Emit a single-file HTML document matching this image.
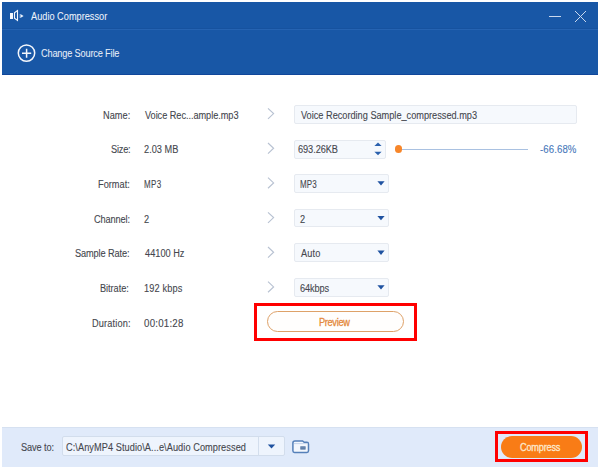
<!DOCTYPE html>
<html><head><meta charset="utf-8">
<style>
html,body{margin:0;padding:0;}
body{width:600px;height:470px;overflow:hidden;background:#ffffff;position:relative;font-family:"Liberation Sans", sans-serif;}
.a{position:absolute;box-sizing:border-box;}
.t{position:absolute;white-space:nowrap;font-family:"Liberation Sans", sans-serif;-webkit-text-stroke:0.1px currentColor;transform:scaleX(0.92);transform-origin:0 0;}
</style></head><body>
<!-- window frame -->
<div class="a" style="left:2px;top:2px;width:596px;height:27px;background:#1857a6;"></div>
<div class="a" style="left:2px;top:28px;width:596px;height:1px;background:#16529f;"></div>
<div class="a" style="left:2px;top:29px;width:596px;height:1px;background:#2563b2;"></div>
<div class="a" style="left:2px;top:30px;width:596px;height:45px;background:#1857a6;"></div>
<div class="a" style="left:2px;top:74px;width:596px;height:1px;background:#10469a;"></div>
<!-- speaker icon -->
<svg class="a" style="left:0;top:0" width="30" height="30" viewBox="0 0 30 30">
  <rect x="10" y="13" width="3" height="6" fill="#f4f7fc"/>
  <path d="M14.5 12.8 L17.5 10.6 L17.5 20.4 L14.5 18.2 Z" fill="none" stroke="#f4f7fc" stroke-width="1.1"/>
  <rect x="19.7" y="14" width="1.1" height="4" fill="#9fbde6"/>
  <path d="M20.8 14.3 L23.6 16 L20.8 17.7 Z" fill="#eef3fb"/>
</svg>
<!-- min / close -->
<svg class="a" style="left:540px;top:0" width="60" height="30" viewBox="540 0 60 30">
  <path d="M549 16.5 H561" stroke="#c9d8ee" stroke-width="1"/>
  <path d="M575 11 L586 22 M586 11 L575 22" stroke="#c9d8ee" stroke-width="1"/>
</svg>
<!-- plus circle -->
<svg class="a" style="left:0;top:30px" width="40" height="45" viewBox="0 30 40 45">
  <circle cx="26.5" cy="53.1" r="8.2" fill="none" stroke="#f4f7fc" stroke-width="1.5"/>
  <path d="M22 53.2 H31.2 M26.6 48.8 V57.8" stroke="#f4f7fc" stroke-width="1.5"/>
</svg>

<!-- chevrons -->
<svg class="a" style="left:260px;top:100px" width="24" height="240" viewBox="260 100 24 240">
  <g fill="none" stroke="#b8c2d2" stroke-width="1.15">
    <path d="M268 108.30 L273.6 113.60 L268 118.90"/>
    <path d="M268 142.97 L273.6 148.27 L268 153.57"/>
    <path d="M268 177.64 L273.6 182.94 L268 188.24"/>
    <path d="M268 212.31 L273.6 217.61 L268 222.91"/>
    <path d="M268 246.98 L273.6 252.28 L268 257.58"/>
    <path d="M268 281.65 L273.6 286.95 L268 292.25"/>
  </g>
</svg>

<!-- fields -->
<div class="a" style="left:294px;top:105px;width:283px;height:18.5px;background:#f6f9fd;border:1px solid #e6eaf0;border-radius:2px;"></div>
<div class="a" style="left:294px;top:140px;width:91.5px;height:18.5px;background:#f6f9fd;border:1px solid #e6eaf0;border-radius:2px;"></div>
<svg class="a" style="left:370px;top:140px" width="16" height="19" viewBox="370 140 16 19">
  <path d="M374.4 146.1 L378 142.5 L381.6 146.1 Z" fill="#2a60ad"/>
  <path d="M374.4 151.7 L378 155.3 L381.6 151.7 Z" fill="#2a60ad"/>
</svg>
<!-- slider -->
<div class="a" style="left:400px;top:148.6px;width:128px;height:1.6px;background:#a9c1e1;"></div>
<div class="a" style="left:394.5px;top:145.4px;width:7.6px;height:7.6px;border-radius:50%;background:#f7862a;"></div>

<div class="a" style="left:294px;top:174px;width:95px;height:18.5px;background:#f6f9fd;border:1px solid #e6eaf0;border-radius:2px;"></div>
<div class="a" style="left:294px;top:208.7px;width:95px;height:18.5px;background:#f6f9fd;border:1px solid #e6eaf0;border-radius:2px;"></div>
<div class="a" style="left:294px;top:243.4px;width:95px;height:18.5px;background:#f6f9fd;border:1px solid #e6eaf0;border-radius:2px;"></div>
<div class="a" style="left:294px;top:278px;width:95px;height:18.5px;background:#f6f9fd;border:1px solid #e6eaf0;border-radius:2px;"></div>
<svg class="a" style="left:370px;top:170px" width="20" height="130" viewBox="370 170 20 130">
  <g fill="#1f52a0">
    <path d="M377.4 181.3 H384.6 L381 185.6 Z"/>
    <path d="M377.4 216 H384.6 L381 220.3 Z"/>
    <path d="M377.4 250.6 H384.6 L381 254.9 Z"/>
    <path d="M377.4 285.3 H384.6 L381 289.6 Z"/>
  </g>
</svg>

<!-- preview -->
<div class="a" style="left:266.5px;top:311px;width:137px;height:21px;border:1px solid #dea168;border-radius:11px;background:#fffefd;"></div>
<div class="a" style="left:254px;top:303px;width:163px;height:38px;border:3px solid #ff0000;"></div>

<!-- footer -->
<div class="a" style="left:2px;top:427px;width:596px;height:40px;background:#e0eafa;border-top:1px solid #d6e1f1;"></div>
<div class="a" style="left:61.5px;top:436.2px;width:223px;height:20.2px;background:#eef4fd;border:1px solid #d2ddec;border-radius:2px;"></div>
<div class="a" style="left:258px;top:437px;width:1px;height:18.5px;background:#d3deed;"></div>
<svg class="a" style="left:260px;top:437px" width="24" height="20" viewBox="260 437 24 20">
  <path d="M267.8 444.5 H275.2 L271.5 448.6 Z" fill="#1f52a0"/>
</svg>
<svg class="a" style="left:288px;top:436px" width="26" height="22" viewBox="288 436 26 22">
  <path d="M292.9 443 Q292.9 440.9 295 440.9 H302.6 L304.2 442.3 H306.9 Q308.5 442.3 308.5 443.9 V450.8 Q308.5 452.4 306.9 452.4 H294.5 Q292.9 452.4 292.9 450.8 Z" fill="#f3f7fd" stroke="#5580b9" stroke-width="1.5"/>
  <path d="M294 443.6 H307.6" stroke="#b9cce6" stroke-width="0.8"/>
  <rect x="300.3" y="446.3" width="5.3" height="3.3" fill="#5474a0"/>
  <path d="M300.3 447.9 H305.6" stroke="#8aa3c4" stroke-width="0.6"/>
</svg>
<div class="a" style="left:501px;top:436px;width:81px;height:21.5px;border-radius:11px;background:#f97c16;"></div>
<div class="a" style="left:495px;top:431px;width:92.5px;height:31px;border:3px solid #ff0000;"></div>

<span id="title" class="t" style="left:30.97px;top:11.83px;font-size:10.00px;line-height:10.00px;letter-spacing:0.004px;color:#eef3fb;transform:scaleX(0.920);-webkit-text-stroke:0.05px currentColor">Audio Compressor</span>
<span id="change" class="t" style="left:40.89px;top:49.43px;font-size:10.00px;line-height:10.00px;letter-spacing:-0.185px;color:#e6edf8;transform:scaleX(0.920);-webkit-text-stroke:0.05px currentColor">Change Source File</span>
<span id="lab0" class="t" style="left:103.30px;top:110.73px;font-size:10.00px;line-height:10.00px;letter-spacing:0.023px;color:#45474e;transform:scaleX(0.920);">Name:</span>
<span id="lab1" class="t" style="left:110.90px;top:145.40px;font-size:10.00px;line-height:10.00px;letter-spacing:-0.227px;color:#45474e;transform:scaleX(0.920);">Size:</span>
<span id="lab2" class="t" style="left:98.30px;top:180.07px;font-size:10.00px;line-height:10.00px;letter-spacing:0.015px;color:#45474e;transform:scaleX(0.920);">Format:</span>
<span id="lab3" class="t" style="left:94.40px;top:214.75px;font-size:10.00px;line-height:10.00px;letter-spacing:-0.121px;color:#45474e;transform:scaleX(0.920);">Channel:</span>
<span id="lab4" class="t" style="left:74.90px;top:249.41px;font-size:10.00px;line-height:10.00px;letter-spacing:-0.111px;color:#45474e;transform:scaleX(0.920);">Sample Rate:</span>
<span id="lab5" class="t" style="left:100.30px;top:284.09px;font-size:10.00px;line-height:10.00px;letter-spacing:-0.061px;color:#45474e;transform:scaleX(0.920);">Bitrate:</span>
<span id="lab6" class="t" style="left:91.80px;top:318.76px;font-size:10.00px;line-height:10.00px;letter-spacing:0.183px;color:#45474e;transform:scaleX(0.920);">Duration:</span>
<span id="val0" class="t" style="left:145.19px;top:110.73px;font-size:10.00px;line-height:10.00px;letter-spacing:-0.060px;color:#45474e;transform:scaleX(0.920);">Voice Rec...ample.mp3</span>
<span id="val1" class="t" style="left:144.46px;top:145.40px;font-size:10.00px;line-height:10.00px;letter-spacing:0.018px;color:#45474e;transform:scaleX(0.920);">2.03 MB</span>
<span id="val2" class="t" style="left:144.30px;top:180.07px;font-size:10.00px;line-height:10.00px;letter-spacing:0.510px;color:#45474e;transform:scaleX(0.800);">MP3</span>
<span id="val3" class="t" style="left:144.46px;top:214.75px;font-size:10.00px;line-height:10.00px;letter-spacing:0.000px;color:#45474e;transform:scaleX(0.920);">2</span>
<span id="val4" class="t" style="left:145.23px;top:249.41px;font-size:10.00px;line-height:10.00px;letter-spacing:0.013px;color:#45474e;transform:scaleX(0.920);">44100 Hz</span>
<span id="val5" class="t" style="left:144.30px;top:284.09px;font-size:10.00px;line-height:10.00px;letter-spacing:0.156px;color:#45474e;transform:scaleX(0.920);">192 kbps</span>
<span id="val6" class="t" style="left:144.49px;top:318.76px;font-size:10.00px;line-height:10.00px;letter-spacing:0.240px;color:#45474e;transform:scaleX(0.970);">00:01:28</span>
<span id="fname" class="t" style="left:301.19px;top:110.73px;font-size:10.00px;line-height:10.00px;letter-spacing:-0.012px;color:#45474e;transform:scaleX(0.920);">Voice Recording Sample_compressed.mp3</span>
<span id="fsize" class="t" style="left:298.40px;top:145.40px;font-size:10.00px;line-height:10.00px;letter-spacing:-0.073px;color:#45474e;transform:scaleX(0.920);">693.26KB</span>
<span id="pct" class="t" style="left:540.01px;top:145.40px;font-size:10.00px;line-height:10.00px;letter-spacing:0.108px;color:#4677ba;transform:scaleX(0.960);">-66.68%</span>
<span id="dd0" class="t" style="left:300.30px;top:180.07px;font-size:10.00px;line-height:10.00px;letter-spacing:0.082px;color:#45474e;transform:scaleX(0.800);">MP3</span>
<span id="dd1" class="t" style="left:300.46px;top:214.75px;font-size:10.00px;line-height:10.00px;letter-spacing:0.000px;color:#45474e;transform:scaleX(0.920);">2</span>
<span id="dd2" class="t" style="left:300.55px;top:249.41px;font-size:10.00px;line-height:10.00px;letter-spacing:0.187px;color:#45474e;transform:scaleX(0.920);">Auto</span>
<span id="dd3" class="t" style="left:300.40px;top:284.09px;font-size:10.00px;line-height:10.00px;letter-spacing:-0.123px;color:#45474e;transform:scaleX(0.920);">64kbps</span>
<span id="preview" class="t" style="left:319.30px;top:317.84px;font-size:10.00px;line-height:10.00px;letter-spacing:-0.344px;color:#e4893c;transform:scaleX(0.920);-webkit-text-stroke:0.3px currentColor">Preview</span>
<span id="saveto" class="t" style="left:21.40px;top:443.14px;font-size:10.00px;line-height:10.00px;letter-spacing:-0.094px;color:#45474e;transform:scaleX(0.920);">Save to:</span>
<span id="path" class="t" style="left:65.90px;top:442.84px;font-size:10.00px;line-height:10.00px;letter-spacing:0.071px;color:#45474e;transform:scaleX(0.920);">C:\AnyMP4 Studio\A...e\Audio Compressed</span>
<span id="compress" class="t" style="left:520.43px;top:442.94px;font-size:10.00px;line-height:10.00px;letter-spacing:-0.240px;color:#fde8cc;transform:scaleX(0.920);-webkit-text-stroke:0.3px currentColor">Compress</span>
</body></html>
